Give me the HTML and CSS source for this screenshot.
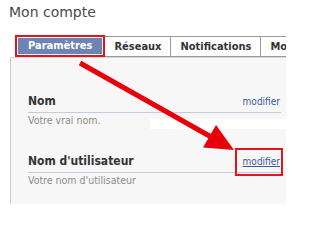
FILE: index.html
```html
<!DOCTYPE html>
<html lang="fr">
<head>
<meta charset="utf-8">
<title>Mon compte</title>
<link rel="stylesheet" href="styles.css">
</head>
<body>
<div class="page">
  <h1 class="title">Mon compte</h1>
  <div class="tabs">
    <div class="tab active"><span class="tab-inner">Paramètres</span></div>
    <div class="tab">Réseaux</div>
    <div class="tab">Notifications</div>
    <div class="tab">Mobile</div>
  </div>
  <div class="panel">
    <div class="section first">
      <div class="head">
        <span class="label">Nom</span>
        <a class="edit" href="#">modifier</a>
      </div>
      <div class="desc-row">
        <div class="desc">Votre vrai nom.</div>
        <div class="band"></div>
      </div>
    </div>
    <div class="section second">
      <div class="head">
        <span class="label">Nom d'utilisateur</span>
        <a class="edit boxed" href="#">modifier</a>
      </div>
      <div class="desc-row">
        <div class="desc">Votre nom d'utilisateur</div>
      </div>
    </div>
  </div>
  <svg class="arrow" width="286" height="204" viewBox="0 0 286 204">
    <line x1="80" y1="63" x2="213" y2="138" stroke="#e8000b" stroke-width="5"/>
    <polygon points="234,150 203,147.5 216,125" fill="#e8000b"/>
  </svg>
</div>
</body>
</html>
```
FILE: styles.css
```css
html, body {
  margin: 0;
  padding: 0;
  background: #ffffff;
}

.page {
  position: relative;
  width: 286px;
  height: 204px;
  overflow: hidden;
  font-family: "DejaVu Sans Condensed", "DejaVu Sans", sans-serif;
  font-stretch: condensed;
}

.title {
  margin: 0;
  padding: 4px 0 0 9px;
  font-family: "DejaVu Sans", sans-serif;
  font-stretch: normal;
  font-weight: normal;
  font-size: 14px;
  line-height: 16px;
  color: #4a4a4a;
}

.tabs {
  display: flex;
  align-items: flex-end;
  margin: 15px 0 0 15px;
  white-space: nowrap;
}

.tab {
  flex: none;
  font-size: 11px;
  font-weight: bold;
  color: #333333;
  line-height: 19px;
  padding: 0 9px;
  border-top: 1px solid #9a9a9a;
  border-bottom: 1px solid #9a9a9a;
  border-right: 1px solid #9a9a9a;
}

.tab.active {
  padding: 1px;
  border: 2px solid #e4141c;
  background: #ffffff;
  line-height: 16px;
}

.tab-inner {
  display: block;
  padding: 0 10px;
  background: #6d84b4;
  color: #ffffff;
}

.panel {
  margin-left: 10px;
  border-left: 1px solid #cccccc;
  border-top: 1px solid #d6d6d6;
  background: #f7f7f7;
  height: 300px;
  padding-left: 17px;
}

.section {
  width: 253px;
}

.section.first {
  padding-top: 36px;
}

.section.second {
  margin-top: 25px;
}

.head {
  display: flex;
  align-items: baseline;
  justify-content: space-between;
  padding-bottom: 3px;
  border-bottom: 1px solid #c4cde0;
}

.label {
  font-size: 12px;
  font-weight: bold;
  line-height: 14px;
  color: #333333;
}

.edit {
  position: relative;
  font-size: 10px;
  line-height: 14px;
  color: #3b5998;
  text-decoration: none;
  margin-right: 1px;
}

.edit.boxed {
  text-decoration: underline;
}

.edit.boxed::after {
  content: "";
  position: absolute;
  left: -8px;
  right: -3px;
  top: -7px;
  bottom: -7px;
  border: 2px solid #e4141c;
}

.desc-row {
  display: flex;
  align-items: flex-start;
}

.desc {
  margin-top: 1px;
  font-size: 10.5px;
  line-height: 12px;
  color: #8c8c8c;
  white-space: nowrap;
}

.band {
  flex: 1;
  height: 10px;
  margin: 6px -20px 0 50px;
  background: #ffffff;
}

.arrow {
  position: absolute;
  left: 0;
  top: 0;
  pointer-events: none;
}
```
